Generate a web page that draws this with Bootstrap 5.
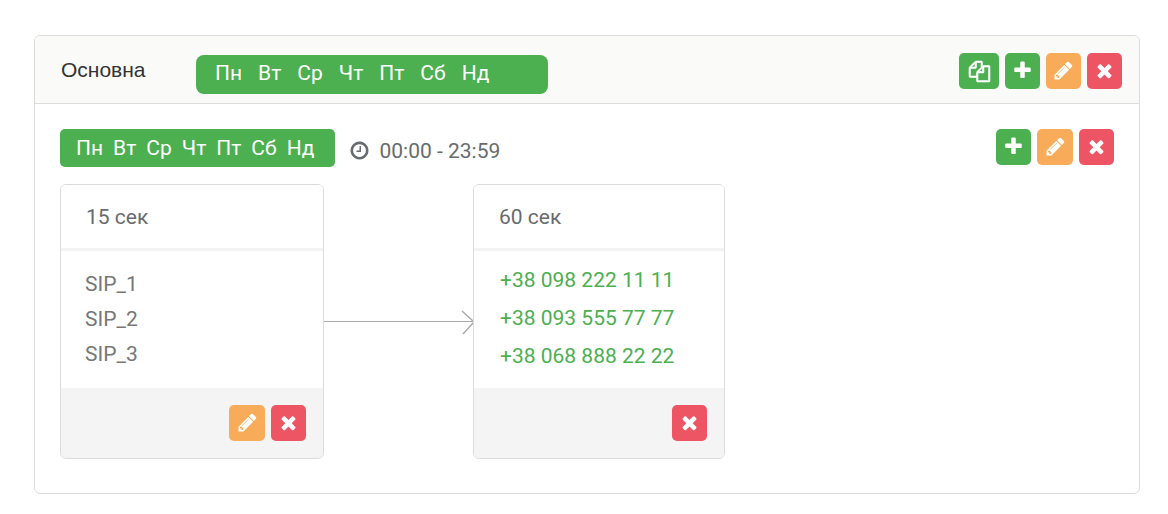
<!DOCTYPE html>
<html lang="uk">
<head>
<meta charset="utf-8">
<meta name="viewport" content="width=device-width, initial-scale=1">
<title>Основна</title>
<link href="https://cdn.jsdelivr.net/npm/bootstrap@5.3.0/dist/css/bootstrap.min.css" rel="stylesheet">
<style>
  body { font-family: Roboto, sans-serif; font-size: 21px; line-height: 36px; color: #666b6e; background: #fff; }
  .page { padding: 35px 28px 20px 34px; }
  .card { --bs-card-border-color: #dcdcdc; --bs-card-border-radius: 6px; --bs-card-inner-border-radius: 5px; --bs-card-color: #666b6e; }
  .rule-head { background: #fafaf8; padding: 17px 17px 9px 26px; }
  .rule-body { padding: 25px 25px 34px; }
  .rule-title { font: 21px/34px "Liberation Sans", sans-serif; color: #333; width: 135px; }
  .days { background: #4caf50; color: #fff; border-radius: 5px; line-height: 38px; padding: 0 20px 0 16px; gap: 10px; }
  .days-wide { border-radius: 8px; line-height: 37px; padding: 0 58px 2px 19px; gap: 16px; margin-top: 2px; }
  .period { margin-left: 14px; gap: 10px; line-height: 44px; height: 38px; }
  .period .ico { margin-top: 11px; }
  .tools { gap: 6px; }
  .icon-btn { width: 35px; height: 36px; padding: 0 0 2px; border: 0; border-radius: 5px; color: #fff; display: inline-flex; align-items: center; justify-content: center; }
  .icon-btn:hover { color: #fff; filter: brightness(.95); }
  .icon-btn-lg { width: 40px; padding: 0; }
  .icon-btn-lg .ico { stroke: #fff; stroke-width: 50px; overflow: visible; }
  .rule-body .bg-edit { width: 36px; }
  .bg-add { background: #4caf50 !important; }
  .bg-edit { background: #f8ac59 !important; }
  .bg-del { background: #ed5565 !important; }
  .ico { width: 21px; height: 21px; fill: currentColor; flex: none; }
  .steps { margin-top: 17px; }
  .step { width: 264px; }
  .step-phones { width: 252px; }
  .step-head { background: #fff; border-bottom: 3px solid #f3f3f3; padding: 14px 25px 13px; }
  .step-foot { background: #f4f4f4; border: 0; padding: 17px; }
  .sips { color: #777; padding: 16px 24px 15px; line-height: 35px; }
  .phones { padding: 10px 26px 13px; line-height: 38px; }
  .phones a { color: #4caf50; text-decoration: none; }
  .link-arrow { width: 149px; height: 275px; flex: none; }
</style>
</head>
<body>
<svg class="d-none" xmlns="http://www.w3.org/2000/svg">
  <symbol id="plus" viewBox="0 0 1792 1792"><path d="M1600 736v192q0 40-28 68t-68 28h-416v416q0 40-28 68t-68 28h-192q-40 0-68-28t-28-68v-416h-416q-40 0-68-28t-28-68v-192q0-40 28-68t68-28h416v-416q0-40 28-68t68-28h192q40 0 68 28t28 68v416h416q40 0 68 28t28 68z"/></symbol>
  <symbol id="times" viewBox="0 0 1792 1792"><path d="M1490 1322q0 40-28 68l-136 136q-28 28-68 28t-68-28l-294-294-294 294q-28 28-68 28t-68-28l-136-136q-28-28-28-68t28-68l294-294-294-294q-28-28-28-68t28-68l136-136q28-28 68-28t68 28l294 294 294-294q28-28 68-28t68 28l136 136q28 28 28 68t-28 68l-294 294 294 294q28 28 28 68z"/></symbol>
  <symbol id="pencil" viewBox="0 0 1792 1792"><path d="M491 1536l91-91-235-235-91 91v107h128v128h107zm523-928q0-22-22-22-10 0-17 7l-542 542q-7 7-7 17 0 22 22 22 10 0 17-7l542-542q7-7 7-17zm-54-192l416 416-832 832h-416v-416zm683 96q0 53-37 90l-166 166-416-416 166-165q36-38 90-38 53 0 91 38l235 234q37 39 37 91z"/></symbol>
  <symbol id="clock" viewBox="0 0 1792 1792"><path d="M1024 544v448q0 14-9 23t-23 9h-320q-14 0-23-9t-9-23v-64q0-14 9-23t23-9h224v-352q0-14 9-23t23-9h64q14 0 23 9t9 23zm416 352q0-148-73-273t-198-198-273-73-273 73-198 198-73 273 73 273 198 198 273 73 273-73 198-198 73-273zm224 0q0 209-103 385.5t-279.5 279.5-385.5 103-385.5-103-279.5-279.5-103-385.5 103-385.5 279.5-279.5 385.5-103 385.5 103 279.5 279.5 103 385.5z"/></symbol>
  <symbol id="files" viewBox="0 0 1792 1792" overflow="visible"><path d="M1696 384q40 0 68 28t28 68v1216q0 40-28 68t-68 28h-960q-40 0-68-28t-28-68v-288h-544q-40 0-68-28t-28-68v-672q0-40 20-88t48-76l408-408q28-28 76-48t88-20h416q40 0 68 28t28 68v328q68-40 128-40h416zm-544 213l-299 299h299v-299zm-640-384l-299 299h299v-299zm196 647l316-316v-416h-384v416q0 40-28 68t-68 28h-416v640h512v-256q0-40 20-88t48-76zm956 804v-1152h-384v416q0 40-28 68t-68 28h-416v640h896z"/></symbol>
</svg>
<main class="page">
  <section class="card">
    <header class="card-header rule-head d-flex align-items-start">
      <h1 class="rule-title mb-0">Основна</h1>
      <div class="days days-wide d-flex">
        <span>Пн</span><span>Вт</span><span>Ср</span><span>Чт</span><span>Пт</span><span>Сб</span><span>Нд</span>
      </div>
      <div class="tools d-flex ms-auto">
        <button type="button" class="btn icon-btn icon-btn-lg bg-add" aria-label="Копіювати"><svg class="ico"><use href="#files"/></svg></button>
        <button type="button" class="btn icon-btn bg-add" aria-label="Додати"><svg class="ico"><use href="#plus"/></svg></button>
        <button type="button" class="btn icon-btn bg-edit" aria-label="Редагувати"><svg class="ico"><use href="#pencil"/></svg></button>
        <button type="button" class="btn icon-btn bg-del" aria-label="Видалити"><svg class="ico"><use href="#times"/></svg></button>
      </div>
    </header>
    <div class="card-body rule-body">
      <div class="d-flex align-items-start">
        <div class="days d-flex">
          <span>Пн</span><span>Вт</span><span>Ср</span><span>Чт</span><span>Пт</span><span>Сб</span><span>Нд</span>
        </div>
        <div class="period d-flex align-items-start">
          <svg class="ico"><use href="#clock"/></svg>
          <span>00:00 - 23:59</span>
        </div>
        <div class="tools d-flex ms-auto">
          <button type="button" class="btn icon-btn bg-add" aria-label="Додати"><svg class="ico"><use href="#plus"/></svg></button>
          <button type="button" class="btn icon-btn bg-edit" aria-label="Редагувати"><svg class="ico"><use href="#pencil"/></svg></button>
          <button type="button" class="btn icon-btn bg-del" aria-label="Видалити"><svg class="ico"><use href="#times"/></svg></button>
        </div>
      </div>
      <div class="steps d-flex">
        <article class="card step flex-shrink-0">
          <div class="card-header step-head">15 сек</div>
          <ul class="sips list-unstyled mb-0">
            <li>SIP_1</li><li>SIP_2</li><li>SIP_3</li>
          </ul>
          <div class="card-footer step-foot tools d-flex justify-content-end mt-auto">
            <button type="button" class="btn icon-btn bg-edit" aria-label="Редагувати"><svg class="ico"><use href="#pencil"/></svg></button>
            <button type="button" class="btn icon-btn bg-del" aria-label="Видалити"><svg class="ico"><use href="#times"/></svg></button>
          </div>
        </article>
        <svg class="link-arrow" viewBox="0 0 149 275" fill="none" stroke="#aaa" aria-hidden="true">
          <path d="M0 137.500H149"/><path d="M138 127l12 11-11 12" stroke-width="1.500"/>
        </svg>
        <article class="card step step-phones flex-shrink-0">
          <div class="card-header step-head">60 сек</div>
          <ul class="phones list-unstyled mb-0">
            <li><a href="tel:+380982221111">+38 098 222 11 11</a></li>
            <li><a href="tel:+380935557777">+38 093 555 77 77</a></li>
            <li><a href="tel:+380688882222">+38 068 888 22 22</a></li>
          </ul>
          <div class="card-footer step-foot tools d-flex justify-content-end mt-auto">
            <button type="button" class="btn icon-btn bg-del" aria-label="Видалити"><svg class="ico"><use href="#times"/></svg></button>
          </div>
        </article>
      </div>
    </div>
  </section>
</main>
<script src="https://cdn.jsdelivr.net/npm/bootstrap@5.3.0/dist/js/bootstrap.bundle.min.js"></script>
</body>
</html>
